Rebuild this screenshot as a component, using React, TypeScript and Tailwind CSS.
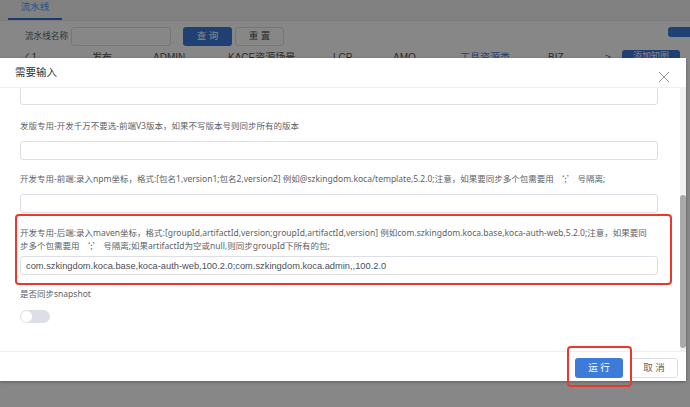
import React from 'react';

const headers = [
  { text: '✓ 1', w: 'w-[70px]', blue: false },
  { text: '发布', w: 'w-[61px]', blue: false },
  { text: 'ADMIN', w: 'w-[75px]', blue: false },
  { text: 'KACE资源场景', w: 'w-[105px]', blue: false },
  { text: 'LCP', w: 'w-[60px]', blue: false },
  { text: 'AMO', w: 'w-[67px]', blue: false },
  { text: '工具资源类', w: 'w-[88px]', blue: true },
  { text: 'BIZ', w: 'w-[57px]', blue: false },
  { text: '>', w: 'w-[17px]', blue: false },
];

const Field: React.FC<{ value?: string; className?: string }> = ({ value, className = '' }) => (
  <div
    className={`h-[19px] rounded-[3px] border border-[#dcdfe6] bg-white px-[5px] flex items-center font-['Liberation_Sans','Noto_Sans_CJK_SC',sans-serif] text-[9.3px] text-[#4d4f53] whitespace-nowrap overflow-hidden ${className}`}
  >
    {value}
  </div>
);

// fullwidth quotes as in the original
const Sep = () => <span className="font-['Noto_Sans_CJK_SC',sans-serif]">‘;’</span>;

const App: React.FC = () => {
  return (
    <div className="relative w-[690px] h-[407px] overflow-hidden bg-white font-['Liberation_Sans','Noto_Sans_CJK_SC',sans-serif]">
      {/* page behind the dialog */}
      <div className="h-[21px] bg-[#f3f4f6] border-b border-[#e4e7ed] pl-[8px] flex items-end">
        <div className="w-[54px] h-[21px] flex flex-col items-center justify-between">
          <span className="text-[9.5px] leading-[16px] text-[#409eff]">流水线</span>
          <div className="w-full h-[2px] bg-[#2f6fd0]" />
        </div>
      </div>
      <div className="flex items-center pl-[25px] pt-[6px] h-[25px]">
        <span className="text-[8.6px] text-[#666] w-[46px] whitespace-nowrap">流水线名称</span>
        <div className="w-[100px] h-[19px] rounded-[3px] border border-[#dcdfe6]" />
        <div className="ml-[12px] w-[49px] h-[19px] rounded-[3px] bg-[#3c7ad8] text-white text-[9.5px] flex items-center justify-center">查 询</div>
        <div className="ml-[3px] w-[49px] h-[19px] rounded-[3px] border border-[#dcdfe6] text-[#555] text-[9.5px] flex items-center justify-center">重 置</div>
        <div className="ml-auto w-[22px] h-[10px] self-start rounded-l-[3px] bg-[#3c7ad8]" />
      </div>
      <div className="flex items-start pl-[22px] pt-[6px]">
        {headers.map((h) => (
          <span key={h.text} className={`${h.w} text-[10px] leading-[12px] whitespace-nowrap ${h.blue ? 'text-[#3c7ad8]' : 'text-[#555]'}`}>
            {h.text}
          </span>
        ))}
        <div className="-mt-[2px] w-[58px] h-[14px] rounded-[3px] bg-[#3c7ad8] text-white text-[9px] flex items-center justify-center">添加知图</div>
      </div>

      {/* overlay */}
      <div className="absolute inset-0 bg-black/[0.47]" />

      {/* dialog */}
      <div className="absolute left-0 top-[58px] w-[686px] h-[323px] bg-white flex flex-col shadow-[0_1px_3px_rgba(0,0,0,0.3)]">
        <div className="h-[30px] shrink-0 border-b border-[#ebeef5] pl-[15px] pr-[16px] flex items-center justify-between">
          <span className="text-[10.5px] text-[#303133]">需要输入</span>
          <svg width="12" height="12" viewBox="0 0 12 12" className="mt-[8px]" fill="none" stroke="#909399" strokeWidth="1">
            <path d="M1 1L11 11M11 1L1 11" />
          </svg>
        </div>

        <div className="h-[263px] shrink-0 flex">
          <div className="flex-1 overflow-hidden pl-[20px] pr-[22px] font-['Noto_Sans','Noto_Sans_CJK_SC',sans-serif] text-[8.5px] leading-[12px] text-[#606266]">
            <Field className="-mt-[2px]" />
            <div className="mt-[15px]">发版专用-开发千万不要选-前端V3版本，如果不写版本号则同步所有的版本</div>
            <Field className="mt-[9px]" />
            <div className="mt-[12px] whitespace-nowrap">
              开发专用-前端:录入npm坐标，格式:[包名1,version1;包名2,version2] 例如@szkingdom.koca/template,5.2.0;注意，如果要同步多个包需要用 <Sep /> 号隔离;
            </div>
            <Field className="mt-[9px]" />
            <div className="relative mt-[14px]">
              <div className="absolute -left-[5px] -right-[14px] -top-[13px] -bottom-[10px] rounded-[4px] border-2 border-[#e8392e]" />
              <div className="whitespace-nowrap">
                开发专用-后端:录入maven坐标，格式:[groupId,artifactId,version;groupId,artifactId,version] 例如com.szkingdom.koca.base,koca-auth-web,5.2.0;注意，如果要同
              </div>
              <div className="whitespace-nowrap">
                步多个包需要用 <Sep /> 号隔离;如果artifactId为空或null,则同步groupId下所有的包;
              </div>
              <Field className="mt-[4px]" value="com.szkingdom.koca.base,koca-auth-web,100.2.0;com.szkingdom.koca.admin,,100.2.0" />
            </div>
            <div className="mt-[13px]">是否同步snapshot</div>
            <div className="mt-[10px] w-[30px] h-[13px] rounded-full bg-[#dcdfe6] flex items-center pl-[1px]">
              <div className="w-[11px] h-[11px] rounded-full bg-white" />
            </div>
          </div>
          <div className="w-[6px] bg-[#f1f1f1] flex flex-col">
            <div className="h-[107px]" />
            <div className="h-[153px] rounded-full bg-[#a9a9a9]" />
          </div>
        </div>

        <div className="relative flex-1 border-t border-[#ebeef5] flex justify-end items-start pt-[6px] pr-[8px] gap-[7px]">
          <div className="relative">
            <div className="absolute -left-[8px] -right-[9px] -top-[12px] -bottom-[9px] rounded-[4px] border-2 border-[#e8392e]" />
            <div className="w-[48px] h-[20px] rounded-[3px] bg-[#3d7bd9] text-white text-[9.5px] flex items-center justify-center">运 行</div>
          </div>
          <div className="w-[48px] h-[20px] rounded-[3px] border border-[#dcdfe6] bg-white text-[#606266] text-[9.5px] flex items-center justify-center">取 消</div>
        </div>
      </div>
    </div>
  );
};

export default App;
